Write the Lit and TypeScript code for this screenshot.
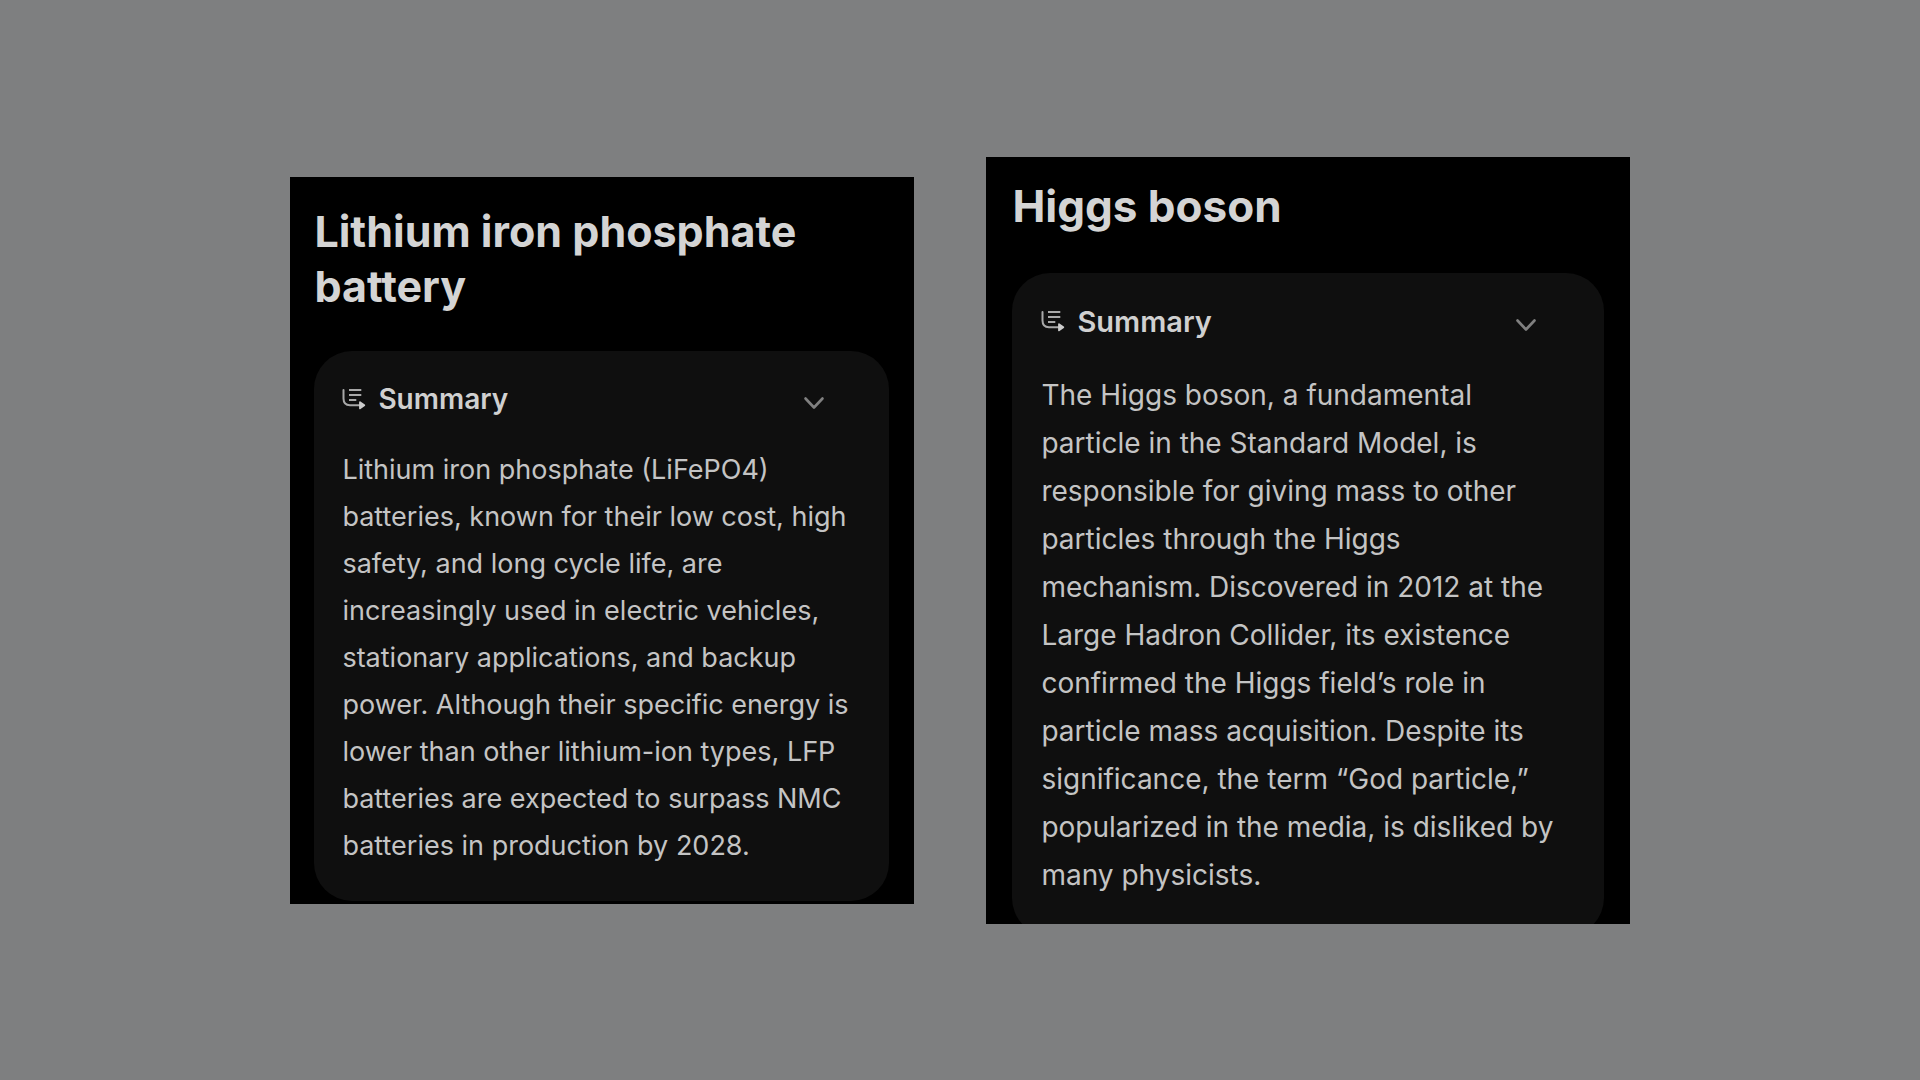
import { LitElement, html, css } from "lit";
import { customElement, property, state } from "lit/decorators.js";

@customElement("summary-panel")
class SummaryPanel extends LitElement {
  @property() heading = "";
  @property() text = "";
  @state() private open = true;

  static styles = css`
    :host {
      display: block;
      box-sizing: border-box;
      overflow: hidden;
      background: #000;
      padding: var(--panel-padding);
    }
    .title {
      margin: 0 0 var(--title-gap);
      color: #d4d4d4;
      font-size: var(--title-size);
      line-height: var(--title-line);
      font-weight: 700;
    }
    .card {
      margin-bottom: var(--card-overhang);
      padding: var(--card-padding);
      border-radius: 38px;
      background: #0f0f0f;
    }
    .toggle {
      display: flex;
      align-items: center;
      gap: 12px;
      width: 100%;
      padding: 0 var(--toggle-inset) 0 0;
      border: 0;
      background: none;
      color: #d0d0d0;
      font: inherit;
      font-size: var(--label-size);
      line-height: var(--label-line);
      font-weight: 600;
      text-align: left;
      cursor: pointer;
    }
    .icon {
      flex: none;
      width: 24px;
      height: 24px;
    }
    .label {
      flex: 1;
    }
    .body {
      margin: var(--body-gap) 0 0;
      color: #c4c4c4;
      font-size: var(--body-size);
      line-height: var(--body-line);
    }
  `;

  render() {
    return html`
      <h2 class="title">${this.heading}</h2>
      <section class="card">
        <button
          class="toggle"
          type="button"
          aria-expanded=${this.open ? "true" : "false"}
          aria-controls="body"
          @click=${() => (this.open = !this.open)}
        >
          <svg class="icon" viewBox="0 0 24 24" fill="none" aria-hidden="true">
            <path
              d="M1.5 3V11.5Q1.5 18.2 8 18.2H18"
              stroke="#a8a8a8"
              stroke-width="2"
              stroke-linecap="round"
            />
            <path
              d="M7 3H19.3M7 8H19.3M7 13H14.3"
              stroke="#a8a8a8"
              stroke-width="2.1"
            />
            <path
              d="M18 15.2L22.3 18.2L18 21.4Z"
              fill="#cccccc"
              stroke="#cccccc"
              stroke-width="1.8"
              stroke-linejoin="round"
            />
          </svg>
          <span class="label">Summary</span>
          <svg class="icon" viewBox="0 0 24 24" fill="none" aria-hidden="true">
            <path
              d="M3.5 11.5L12 20.5L20.5 11.5"
              stroke="#808080"
              stroke-width="2.6"
              stroke-linecap="round"
              stroke-linejoin="round"
            />
          </svg>
        </button>
        <p class="body" id="body" ?hidden=${!this.open}>${this.text}</p>
      </section>
    `;
  }
}

@customElement("app-root")
class AppRoot extends LitElement {
  static styles = css`
    :host {
      display: flex;
      justify-content: center;
      align-items: center;
      gap: 72px;
      min-height: 100vh;
      background: #7e7f80;
      font-family: Inter, "Liberation Sans", sans-serif;
    }
    .battery {
      width: 32.5%;
      --panel-padding: 27px 25px 3px 24px;
      --title-size: 43px;
      --title-line: 55px;
      --title-gap: 37px;
      --card-padding: 30px 32px 32px 28px;
      --card-overhang: 0;
      --toggle-inset: 31px;
      --label-size: 28px;
      --label-line: 36px;
      --body-gap: 29px;
      --body-size: 27px;
      --body-line: 47px;
    }
    .boson {
      width: 33.5%;
      --panel-padding: 21px 26px 0 26px;
      --title-size: 44px;
      --title-line: 57px;
      --title-gap: 38px;
      --card-padding: 30px 46px 37px 29px;
      --card-overhang: -12px;
      --toggle-inset: 20px;
      --label-size: 29px;
      --label-line: 37px;
      --body-gap: 31px;
      --body-size: 28px;
      --body-line: 48px;
    }
  `;

  render() {
    return html`
      <summary-panel
        class="battery"
        heading="Lithium iron phosphate battery"
        text="Lithium iron phosphate (LiFePO4) batteries, known for their low cost, high safety, and long cycle life, are increasingly used in electric vehicles, stationary applications, and backup power. Although their specific energy is lower than other lithium-ion types, LFP batteries are expected to surpass NMC batteries in production by 2028."
      ></summary-panel>
      <summary-panel
        class="boson"
        heading="Higgs boson"
        text="The Higgs boson, a fundamental particle in the Standard Model, is responsible for giving mass to other particles through the Higgs mechanism. Discovered in 2012 at the Large Hadron Collider, its existence confirmed the Higgs field’s role in particle mass acquisition. Despite its significance, the term “God particle,” popularized in the media, is disliked by many physicists."
      ></summary-panel>
    `;
  }
}
